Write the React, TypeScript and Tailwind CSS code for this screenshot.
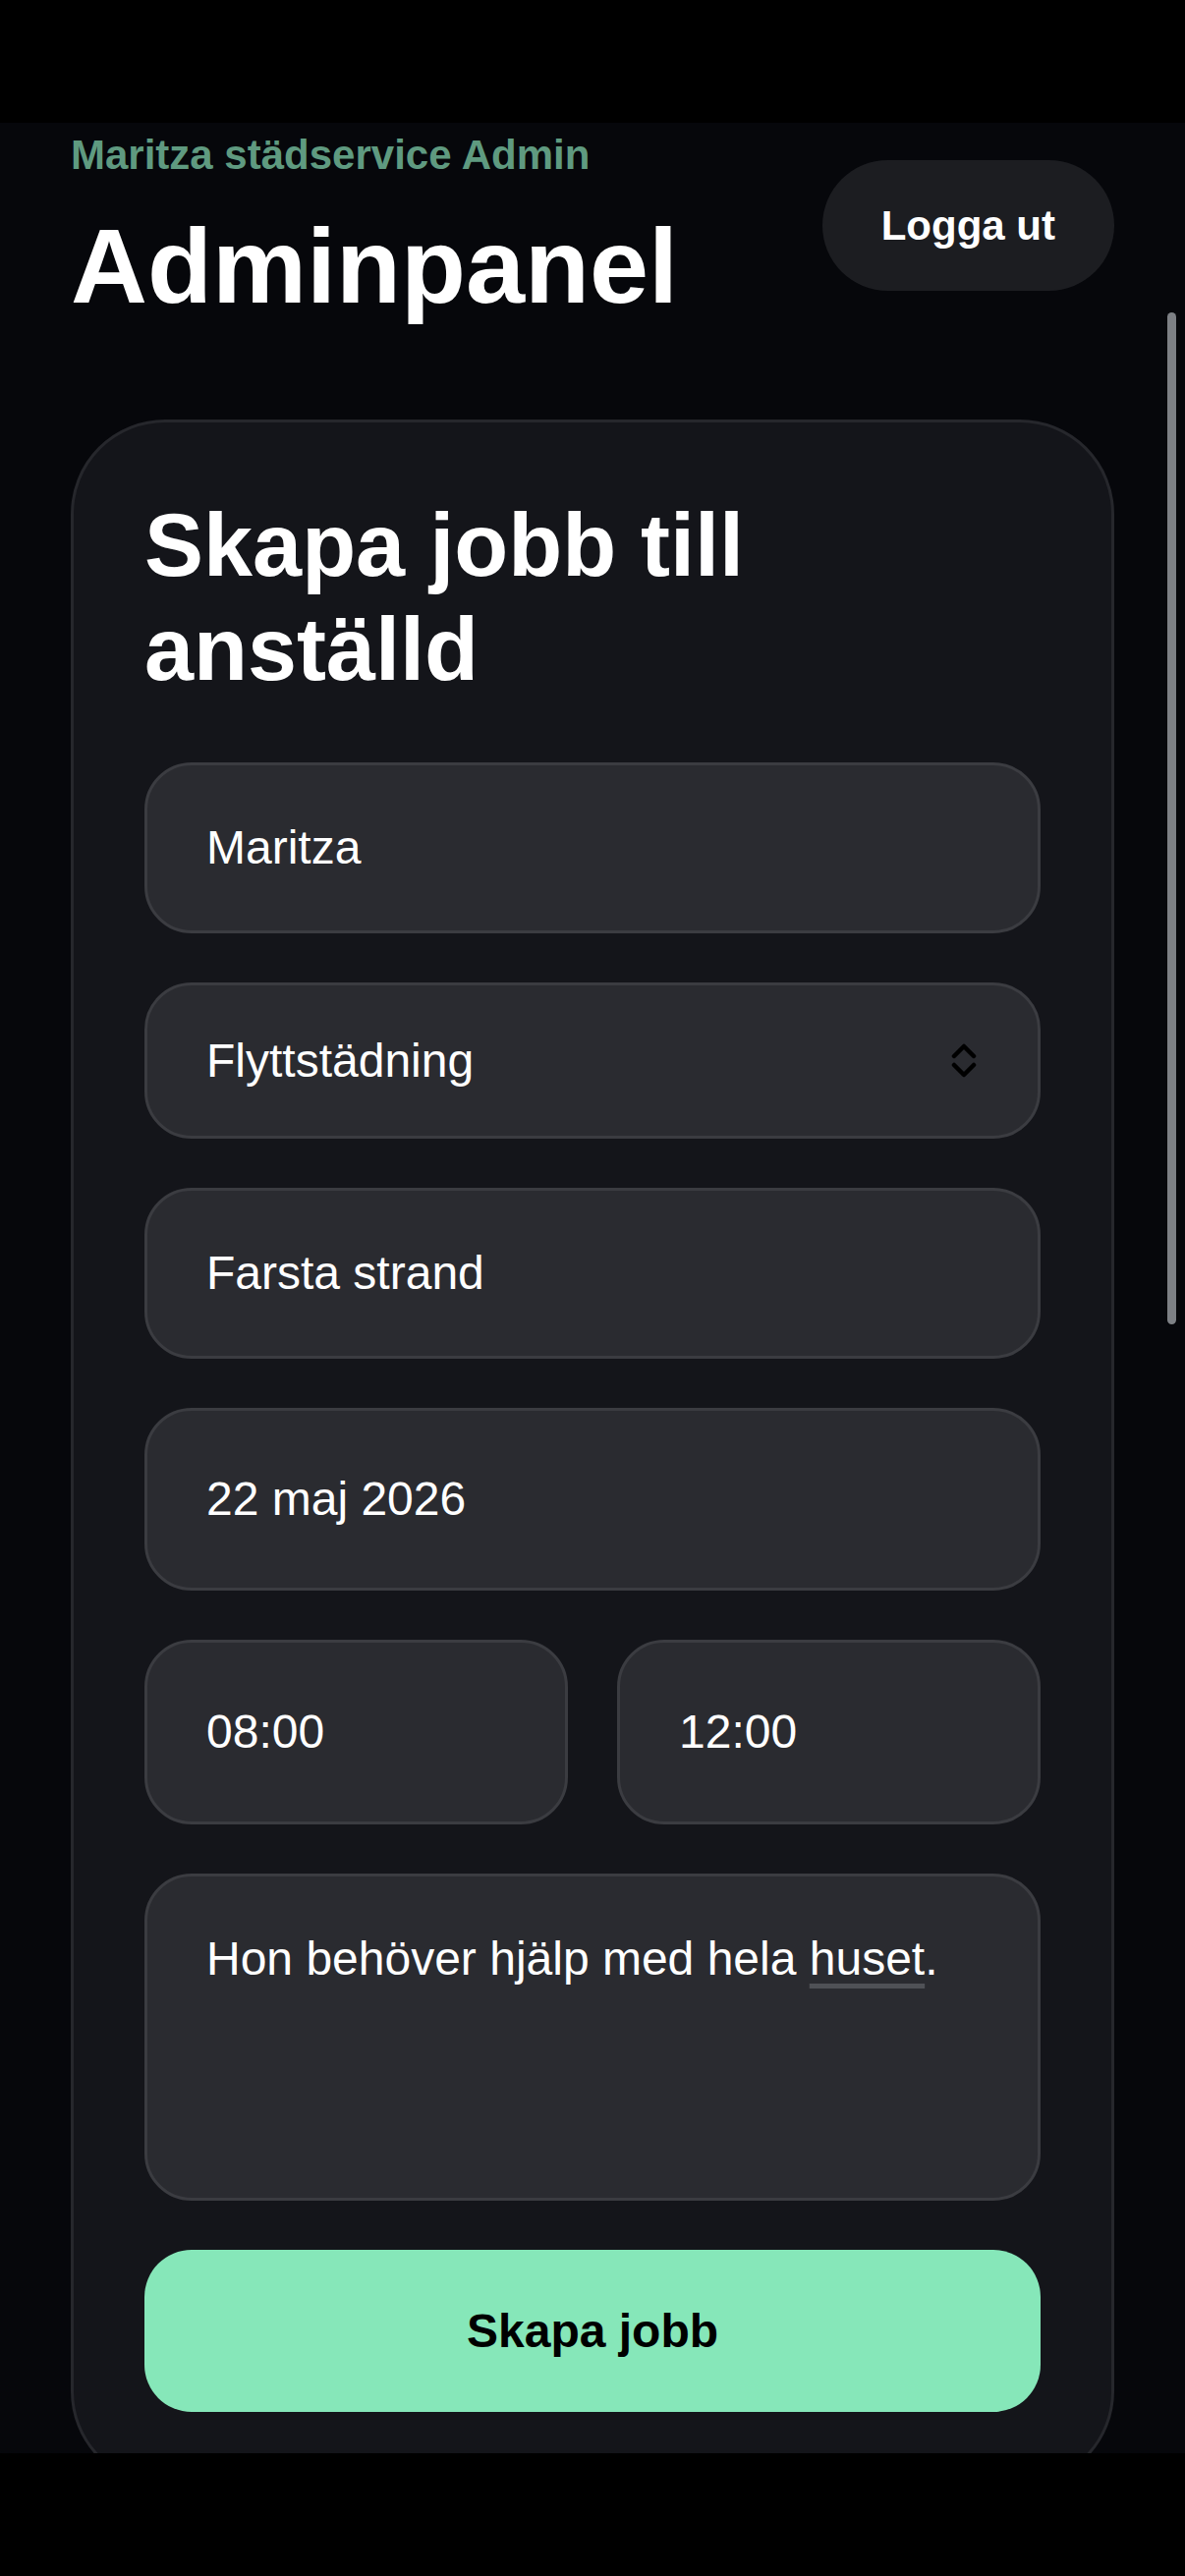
import type { ReactNode } from "react";

const Field = ({
  children,
  height,
  className = "",
}: {
  children: ReactNode;
  height: string;
  className?: string;
}) => {
  return (
    <div
      className={`flex w-full items-center rounded-[48px] border-[3px] border-[#3b3c41] bg-[#2a2b30] px-[60px] text-[48px] leading-[72px] text-white ${height} ${className}`}
    >
      {children}
    </div>
  );
};

const SelectChevron = () => (
  <svg width="26" height="37" viewBox="0 0 26 37" fill="none">
    <polyline
      points="3,14 13,4 23,14"
      stroke="#000"
      strokeWidth="4.5"
      strokeLinecap="round"
      strokeLinejoin="round"
    />
    <polyline
      points="3,23 13,33 23,23"
      stroke="#000"
      strokeWidth="4.5"
      strokeLinecap="round"
      strokeLinejoin="round"
    />
  </svg>
);

const App = () => {
  return (
    <div className="flex h-[2622px] w-[1206px] flex-col overflow-hidden bg-black font-['Liberation_Sans',Arial,sans-serif]">
      {/* Status bar */}
      <div className="h-[125px] shrink-0 bg-black" />

      <div className="relative flex-1 overflow-hidden bg-[#06070b]">
        <div className="px-[72px] pt-[3px]">
          {/* Header */}
          <div className="flex items-center justify-between">
            <div>
              <p className="text-[42px] font-bold leading-[60px] text-[#5f9a80]">
                Maritza städservice Admin
              </p>
              <h1 className="mt-[23px] text-[108px] font-bold leading-[120px] text-white">
                Adminpanel
              </h1>
            </div>

            <button className="flex h-[133px] items-center rounded-full bg-[#1c1d21] px-[60px] text-[42px] font-bold leading-[60px] text-white">
              Logga ut
            </button>
          </div>

          {/* Create job card */}
          <div className="mt-[96px] rounded-[96px] border-[3px] border-[#26272c] bg-[#14151a] p-[72px]">
            <h2 className="text-[90px] font-bold leading-[106px] text-white">
              Skapa jobb till anställd
            </h2>

            <div className="mt-[62px] flex flex-col gap-[50px]">
              <Field height="h-[174px]">Maritza</Field>

              <Field height="h-[159px]" className="justify-between pr-[62px]">
                <span>Flyttstädning</span>
                <SelectChevron />
              </Field>

              <Field height="h-[174px]">Farsta strand</Field>

              <Field height="h-[186px]">22 maj 2026</Field>

              <div className="grid grid-cols-2 gap-[50px]">
                <Field height="h-[188px]">08:00</Field>
                <Field height="h-[188px]">12:00</Field>
              </div>

              <div className="h-[333px] w-full rounded-[48px] border-[3px] border-[#3b3c41] bg-[#2a2b30] px-[60px] py-[48px] text-[48px] leading-[72px] text-white">
                Hon behöver hjälp med hela{" "}
                <span className="underline decoration-[#4f5156] decoration-[5px] underline-offset-[9px]">
                  huset
                </span>
                .
              </div>

              <button className="flex h-[165px] w-full items-center justify-center rounded-[48px] bg-[#86e7b9] text-[48px] font-bold text-black">
                Skapa jobb
              </button>
            </div>
          </div>
        </div>

        {/* Scroll indicator */}
        <div className="absolute right-[9px] top-[193px] h-[1030px] w-[9px] rounded-full bg-[#7d8085]" />
      </div>

      {/* Home indicator area */}
      <div className="h-[125px] shrink-0 bg-black" />
    </div>
  );
};

export default App;
